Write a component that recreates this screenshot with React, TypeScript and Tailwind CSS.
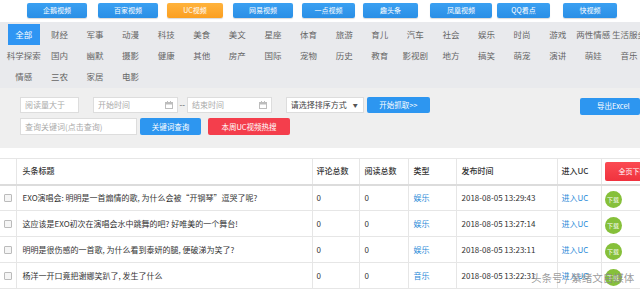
import React from 'react';

const font = { fontFamily: '"Noto Sans CJK SC", "Liberation Sans", sans-serif' };

const topTabs = [
  { label: '企鹅视频', w: 'w-[60px]', ml: 'ml-[27px]' },
  { label: '百家视频', w: 'w-[60px]', ml: 'ml-[11px]' },
  { label: 'UC视频', w: 'w-[56px]', ml: 'ml-[9px]', active: true },
  { label: '网易视频', w: 'w-[60px]', ml: 'ml-[10px]' },
  { label: '一点视频', w: 'w-[53px]', ml: 'ml-[9px]' },
  { label: '趣头条', w: 'w-[55px]', ml: 'ml-[8px]' },
  { label: '凤凰视频', w: 'w-[62px]', ml: 'ml-[12px]' },
  { label: 'QQ看点', w: 'w-[53px]', ml: 'ml-[5px]' },
  { label: '快视频', w: 'w-[54px]', ml: 'ml-[13px]' },
];

const categoryRows = [
  ['全部', '财经', '军事', '动漫', '科技', '美食', '美文', '星座', '体育', '旅游', '育儿', '汽车', '社会', '娱乐', '时尚', '游戏', '两性情感', '生活服务'],
  ['科学探索', '国内', '幽默', '摄影', '健康', '其他', '房产', '国际', '宠物', '历史', '教育', '影视剧', '地方', '搞笑', '萌宠', '演讲', '萌娃', '音乐'],
  ['情感', '三农', '家居', '电影'],
];

const rows = [
  { title: 'EXO演唱会: 明明是一首煽情的歌, 为什么会被“开钢琴”逗哭了呢?', type: '娱乐', time: '2018-08-05 13:29:43' },
  { title: '这应该是EXO初次在演唱会水中跳舞的吧? 好唯美的一个舞台!', type: '娱乐', time: '2018-08-05 13:27:14' },
  { title: '明明是很伤感的一首歌, 为什么看到泰妍的腿, 便破涕为笑了?', type: '娱乐', time: '2018-08-05 13:23:11' },
  { title: '杨洋一开口竟把谢娜笑趴了, 发生了什么', type: '音乐', time: '2018-08-05 13:22:31' },
];

function CalendarIcon() {
  return (
    <svg width="8" height="8" viewBox="0 0 8 8" className="shrink-0">
      <rect x="0.5" y="1.5" width="7" height="6" fill="none" stroke="#bdbdbd" />
      <rect x="0.5" y="1.5" width="7" height="2" fill="#bdbdbd" />
      <rect x="2" y="0" width="1" height="2" fill="#bdbdbd" />
      <rect x="5" y="0" width="1" height="2" fill="#bdbdbd" />
    </svg>
  );
}

export default function App() {
  return (
    <div className="relative w-[640px] h-[291px] overflow-hidden bg-white text-[#333]" style={font}>
      {/* top source tabs */}
      <div className="flex h-[22px] items-start pt-[3px] bg-white">
        {topTabs.map((t) => (
          <div
            key={t.label}
            className={`${t.w} ${t.ml} shrink-0 h-[15px] rounded-[2px] flex items-center justify-center text-[7px] text-white shadow-[0_1px_1px_rgba(0,0,0,0.15)] ${
              t.active ? 'bg-gradient-to-b from-[#ffb33c] to-[#fb9f1f]' : 'bg-gradient-to-b from-[#3aa0f2] to-[#2a8fe6]'
            }`}
          >
            {t.label}
          </div>
        ))}
      </div>

      {/* categories */}
      <div className="bg-[#e9eaed] h-[66px] pl-[6px] pt-[2px]">
        {categoryRows.map((row, ri) => (
          <div key={ri} className="flex h-[21px] items-center">
            {row.map((c) => (
              <div key={c} className="w-[35.6px] shrink-0 flex justify-center">
                <span
                  className={`whitespace-nowrap text-[8.5px] leading-[21px] ${
                    c === '全部' ? 'bg-[#2f95f3] text-white w-[32px] text-center' : 'text-[#666]'
                  }`}
                >
                  {c}
                </span>
              </div>
            ))}
          </div>
        ))}
      </div>

      {/* filters */}
      <div className="bg-[#efefef] h-[60px] pt-[9px]">
        <div className="flex items-center h-[16px]">
          <div className="ml-[20px] w-[62px] h-[16px] bg-white border border-[#ddd] text-[8px] text-[#aaa] flex items-center pl-[4px]">阅读量大于</div>
          <div className="ml-[14px] w-[89px] h-[16px] bg-white border border-[#ddd] text-[8px] text-[#aaa] flex items-center justify-between pl-[4px] pr-[4px]">
            <span>开始时间</span>
            <CalendarIcon />
          </div>
          <span className="w-[10px] text-center text-[8px] text-[#555]">--</span>
          <div className="w-[89px] h-[16px] bg-white border border-[#ddd] text-[8px] text-[#aaa] flex items-center justify-between pl-[4px] pr-[4px]">
            <span>结束时间</span>
            <CalendarIcon />
          </div>
          <div className="ml-[14px] w-[82px] h-[16px] bg-white border border-[#ddd] text-[8px] text-[#444] flex items-center justify-between pl-[4px] pr-[5px]">
            <span>请选择排序方式</span>
            <span className="text-[5px] text-[#555]">▼</span>
          </div>
          <div className="ml-[3px] w-[67px] h-[16px] rounded-[2px] bg-[#2d96f0] text-white text-[7.5px] flex items-center justify-center">开始抓取&gt;&gt;</div>
          <div className="ml-[150px] w-[60px] h-[17px] mt-[2px] rounded-[2px] bg-[#2d96f0] text-white text-[7.5px] flex items-center pl-[17px] whitespace-nowrap shrink-0">导出Excel</div>
        </div>
        <div className="flex items-center h-[17px] mt-[5px]">
          <div className="ml-[20px] w-[117px] h-[17px] bg-white border border-[#ddd] text-[8px] text-[#aaa] flex items-center pl-[4px]">查询关键词(点击查询)</div>
          <div className="ml-[3px] w-[61px] h-[17px] rounded-[2px] bg-[#2d96f0] text-white text-[7.5px] flex items-center justify-center">关键词查询</div>
          <div className="ml-[7px] w-[82px] h-[17px] rounded-[2px] bg-[#f43e4c] text-white text-[7.5px] flex items-center justify-center">本周UC视频热搜</div>
        </div>
      </div>

      {/* table */}
      <div className="pt-[10px] bg-white">
        <table className="border-collapse table-fixed w-[660px] text-[8px]">
          <colgroup>
            <col className="w-[16px]" />
            <col className="w-[296px]" />
            <col className="w-[47px]" />
            <col className="w-[49px]" />
            <col className="w-[48px]" />
            <col className="w-[101px]" />
            <col className="w-[44px]" />
            <col className="w-[59px]" />
          </colgroup>
          <thead>
            <tr className="h-[26px] border-t border-[#e6e6e6] border-b-2 border-b-[#dcdcdc]">
              <th className="border-r border-[#e6e6e6]"></th>
              <th className="border-r border-[#e6e6e6] text-left font-medium pl-[6px] text-[#333]">头条标题</th>
              <th className="border-r border-[#e6e6e6] text-left font-medium pl-[4px] text-[#333]">评论总数</th>
              <th className="border-r border-[#e6e6e6] text-left font-medium pl-[5px] text-[#333]">阅读总数</th>
              <th className="border-r border-[#e6e6e6] text-left font-medium pl-[5px] text-[#333]">类型</th>
              <th className="border-r border-[#e6e6e6] text-left font-medium pl-[5px] text-[#333]">发布时间</th>
              <th className="border-r border-[#e6e6e6] text-left font-medium pl-[4px] text-[#333]">进入UC</th>
              <th className="text-left pl-[3px]">
                <div className="w-[56px] h-[19px] rounded-[2px] bg-gradient-to-b from-[#fb4a52] to-[#f0323e] text-white text-[7px] font-normal flex items-center justify-center">全页下载</div>
              </th>
            </tr>
          </thead>
          <tbody>
            {rows.map((r) => (
              <tr key={r.time} className="h-[26px] border-b border-[#e6e6e6]">
                <td className="border-r border-[#e6e6e6]">
                  <div className="ml-[4px] w-[8px] h-[8px] border border-[#bbb] rounded-[1px] bg-[#f5f5f5]" />
                </td>
                <td className="border-r border-[#e6e6e6] pl-[6px] whitespace-nowrap text-[#333]">{r.title}</td>
                <td className="border-r border-[#e6e6e6] pl-[4px]">0</td>
                <td className="border-r border-[#e6e6e6] pl-[5px]">0</td>
                <td className="border-r border-[#e6e6e6] pl-[5px] text-[#2a8ad8]">{r.type}</td>
                <td className="border-r border-[#e6e6e6] pl-[5px] whitespace-nowrap">{r.time}</td>
                <td className="border-r border-[#e6e6e6] pl-[4px] text-[#2a8ad8] whitespace-nowrap">进入UC</td>
                <td className="pl-[3px]">
                  <div className="mt-[3px] w-[17px] h-[17px] rounded-full bg-[#86c03a] text-white text-[6px] flex items-center justify-center">下载</div>
                </td>
              </tr>
            ))}
          </tbody>
        </table>
      </div>

      {/* watermark */}
      <div className="absolute left-[531px] top-[270px] text-[10.5px] text-[#8a8a8a]/85 whitespace-nowrap">头条号 / 紫绪文自媒体</div>
    </div>
  );
}
